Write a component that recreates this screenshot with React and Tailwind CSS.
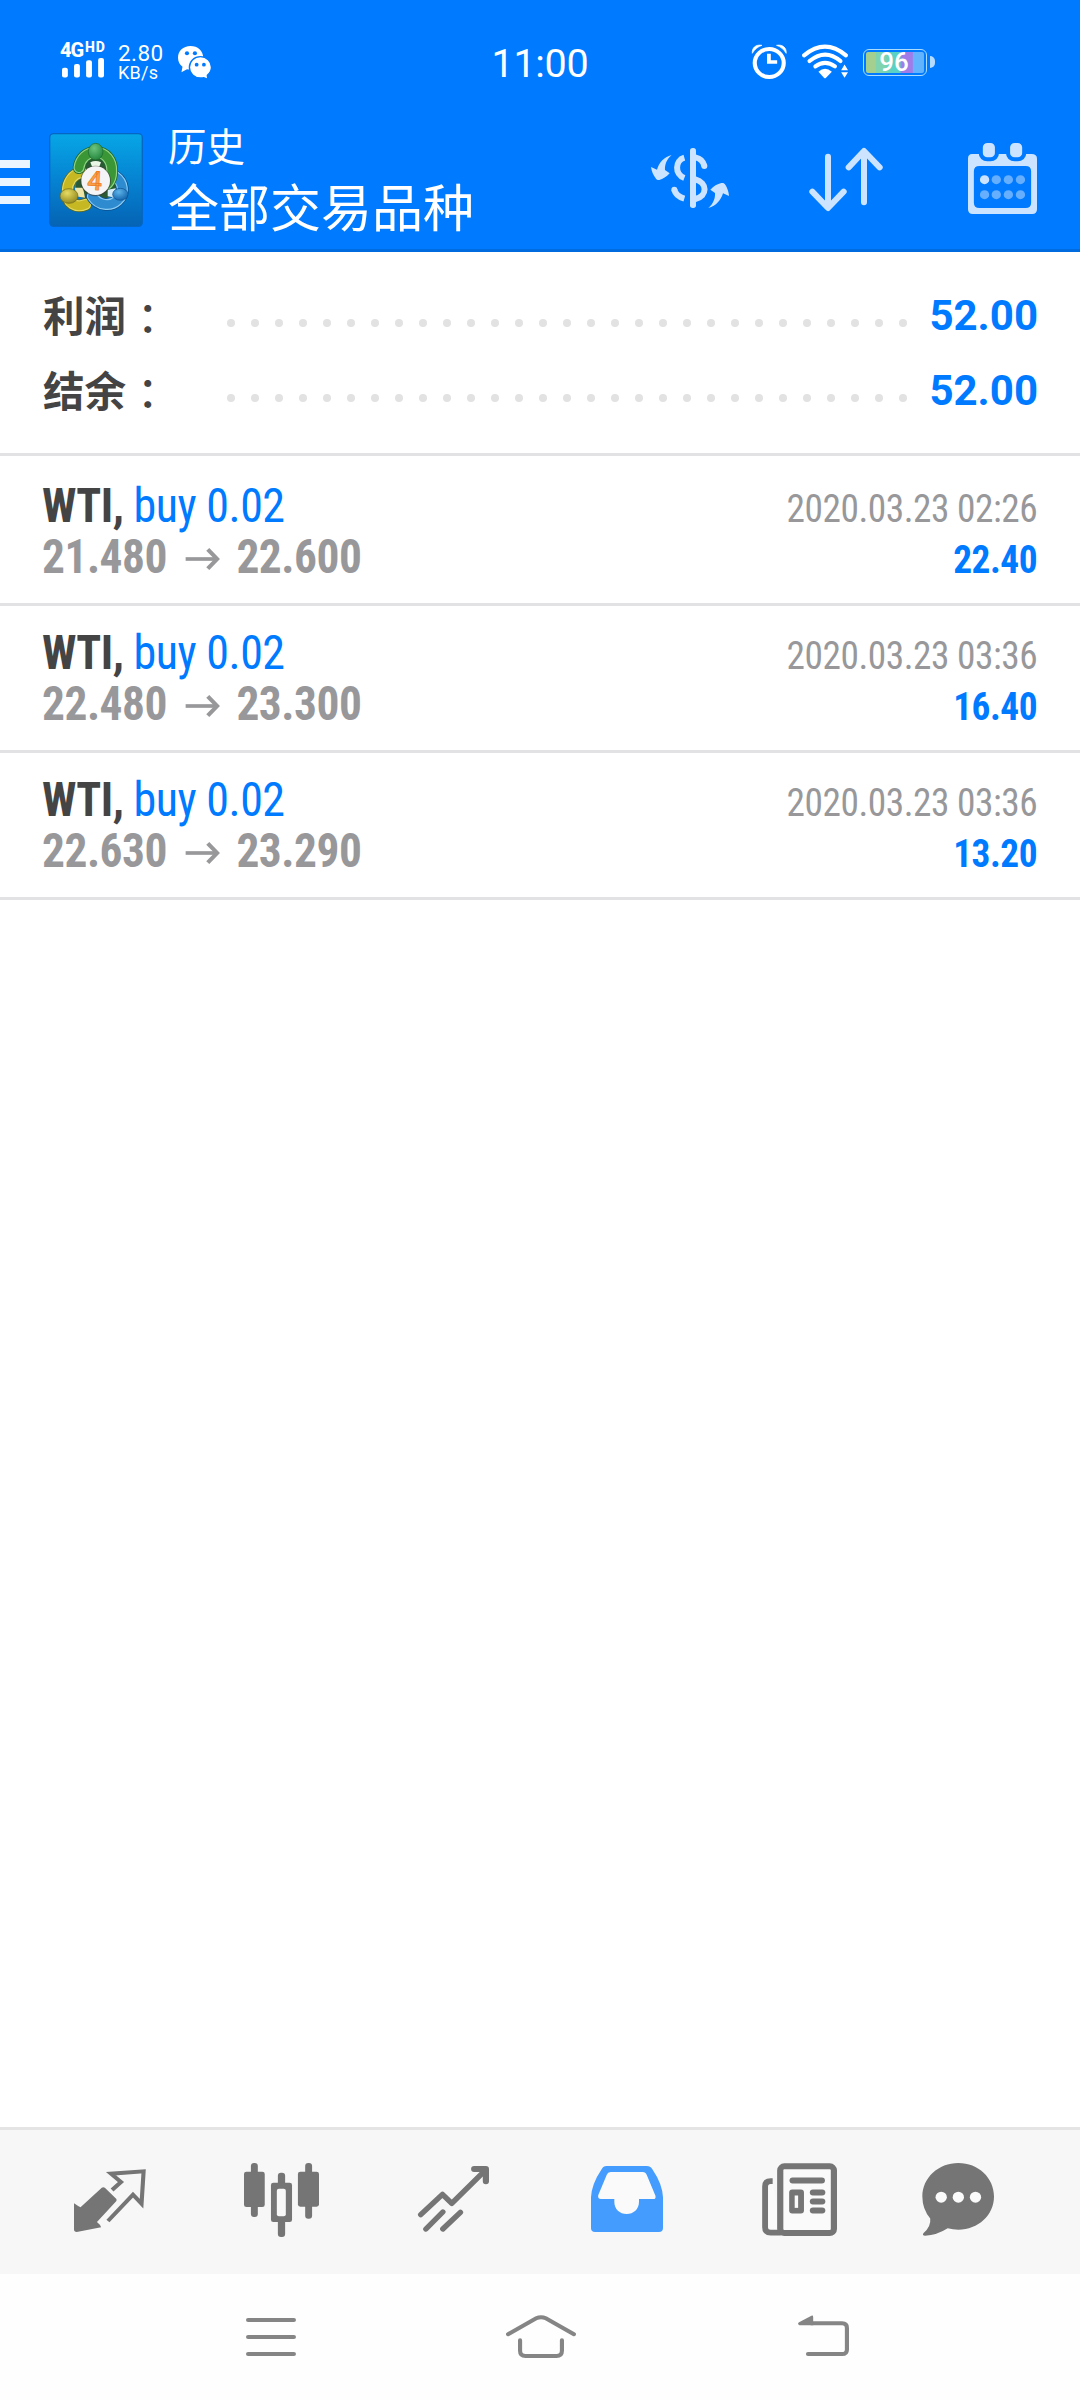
const CJK = "font-['Roboto','Noto_Sans_CJK_SC',sans-serif]"
const CONDENSED = "font-['Roboto_Condensed','Roboto',sans-serif] [font-stretch:75%]"

const summary = [
  { label: '利润', value: '52.00' },
  { label: '结余', value: '52.00' },
]

const deals = [
  { symbol: 'WTI', side: 'buy 0.02', open: '21.480', close: '22.600', time: '2020.03.23 02:26', profit: '22.40' },
  { symbol: 'WTI', side: 'buy 0.02', open: '22.480', close: '23.300', time: '2020.03.23 03:36', profit: '16.40' },
  { symbol: 'WTI', side: 'buy 0.02', open: '22.630', close: '23.290', time: '2020.03.23 03:36', profit: '13.20' },
]

function Icon({ box, className, children }) {
  return (
    <svg viewBox={box} preserveAspectRatio="none" className={`shrink-0 overflow-visible ${className}`}>
      {children}
    </svg>
  )
}

function SignalIcon() {
  return (
    <Icon box="180 173 122 58" className="w-[42px] h-[19.5px]">
      <g fill="#fff">
        <rect x="180" y="202" width="17" height="29" rx="6" />
        <rect x="215" y="191" width="17" height="40" rx="6" />
        <rect x="250" y="180" width="17" height="51" rx="6" />
        <rect x="285" y="173" width="17" height="58" rx="6" />
      </g>
    </Icon>
  )
}

function WechatIcon() {
  return (
    <Icon box="517 138 97 99" className="w-[33.5px] h-[33px]">
      <path d="M553 138c-21 0-36 15-36 35 0 12 5 21 13 27l-3 17 16-9c3 1 7 1 10 1 21 0 37-15 37-36s-16-35-37-35z" fill="#fff" />
      <circle cx="543" cy="160" r="6" fill="#007aff" />
      <circle cx="566" cy="160" r="6" fill="#007aff" />
      <path d="M582 170c-18 0-32 14-32 32s14 32 32 32c4 0 7 0 10-1l11 5-1-12c7-6 12-14 12-24 0-18-14-32-32-32z" fill="#fff" stroke="#007aff" strokeWidth="4" />
      <circle cx="571" cy="194" r="5.5" fill="#007aff" />
      <circle cx="592" cy="194" r="5.5" fill="#007aff" />
    </Icon>
  )
}

function AlarmIcon() {
  return (
    <Icon box="615 135 100 102" className="w-[34.5px] h-[34px]">
      <circle cx="665" cy="189" r="42" fill="none" stroke="#fff" strokeWidth="12" />
      <path d="M664 161v25h24" fill="none" stroke="#fff" strokeWidth="11" />
      <path d="M616 160c-2-16 10-28 28-24-12 4-21 12-28 24zM714 160c2-16-10-28-28-24 12 4 21 12 28 24z" fill="#fff" stroke="#fff" strokeWidth="2" />
    </Icon>
  )
}

function WifiIcon() {
  return (
    <Icon box="757 135 134 100" className="w-[46px] h-[33.5px]">
      <g fill="none" stroke="#fff" strokeWidth="12" strokeLinecap="round">
        <path d="M763 166q61-52 122 0" />
        <path d="M779 183q46-39 90 0" />
        <path d="M796 199q28-21 57 0" />
      </g>
      <path d="M805 215q19-18 39 0l-17 18q-3 3-6 0z" fill="#fff" />
      <path d="M871 210l10-17 10 17zM871 216l10 17 10-17z" fill="#fff" />
    </Icon>
  )
}

function Battery() {
  return (
    <div className="flex items-center">
      <div className="w-[64px] h-[27px] rounded-[6px] border-[1.5px] border-[#a9dcff] p-[2px]">
        <div className="h-full rounded-[2px] flex items-center justify-center bg-[linear-gradient(90deg,#a5cf8f_0_16%,#7fd3ae_18%_32%,#5bd0c4_45%_58%,#a07ce8_62%_80%,#62b4ff_81%)]">
          <span className="text-white text-[26px] leading-none font-medium -ml-[2px]">96</span>
        </div>
      </div>
      <div className="w-[5px] h-[12px] ml-[3px] rounded-r-full bg-[#b5dcff]" />
    </div>
  )
}

function StatusBar() {
  return (
    <div className="h-[120px] flex items-start px-[60px] text-white font-['Roboto',sans-serif]">
      <div className="w-[58px] pt-[42px]">
        <div className="flex items-start h-[15.5px] font-extrabold">
          <span className="text-[20px] leading-[16px] w-[25px] tracking-[-1px]">4G</span>
          <span className="text-[14px] leading-[10px] tracking-[0.8px]">HD</span>
        </div>
        <div className="pl-[2px]">
          <SignalIcon />
        </div>
      </div>
      <div className="w-[60px] pt-[43px]">
        <div className="text-[22.5px] leading-[21px] tracking-[0.4px]">2.80</div>
        <div className="text-[18px] leading-[18px] tracking-[0.3px]">KB/s</div>
      </div>
      <div className="pt-[46px]">
        <WechatIcon />
      </div>
      <div className="ml-[280px] pt-[44px] text-[39.5px] leading-[40px] tracking-[-0.3px]">11:00</div>
      <div className="flex items-center ml-auto mr-[85px] pt-[45px] gap-[15.5px]">
        <AlarmIcon />
        <WifiIcon />
        <Battery />
      </div>
    </div>
  )
}

function AppLogo() {
  const yellowArm = 'M258 284C230 296 200 282 203 244c1-28 16-50 42-56'
  const blueArm = 'M346 200c26 18 30 52 8 72-22 20-58 16-76-12'
  const greenArm = 'M238 174c4-28 24-46 50-46 30 0 50 26 48 58 0 14-4 26-12 36'
  return (
    <Icon box="148 70 282 282" className="w-[94px] h-[94px]">
      <defs>
        <linearGradient id="tile" x1="0" y1="0" x2="0" y2="1">
          <stop offset="0" stopColor="#07a6e6" />
          <stop offset="0.5" stopColor="#0583d2" />
          <stop offset="1" stopColor="#0563b4" />
        </linearGradient>
        <radialGradient id="green" cx="0.4" cy="0.3" r="0.8">
          <stop offset="0" stopColor="#6cc47e" />
          <stop offset="1" stopColor="#1c7f35" />
        </radialGradient>
        <radialGradient id="yellow" cx="0.4" cy="0.3" r="0.8">
          <stop offset="0" stopColor="#e6dc62" />
          <stop offset="1" stopColor="#8a8018" />
        </radialGradient>
        <radialGradient id="blue" cx="0.4" cy="0.3" r="0.8">
          <stop offset="0" stopColor="#5db4ea" />
          <stop offset="1" stopColor="#0a5ca6" />
        </radialGradient>
      </defs>
      <rect x="150" y="72" width="278" height="278" rx="12" fill="url(#tile)" stroke="#0566c4" strokeWidth="4" />
      <path d="M234 180q54-70 108 0l10 70-60 30-66-24z" fill="#2a5a34" />
      <g strokeLinecap="round" fill="none">
        <path d={yellowArm} stroke="#5f6a1e" strokeWidth="38" />
        <path d={yellowArm} stroke="#e3da62" strokeWidth="33" />
        <path d={yellowArm} stroke="#c6b823" strokeWidth="26" />
        <path d={blueArm} stroke="#0c4f8e" strokeWidth="38" />
        <path d={blueArm} stroke="#8accf3" strokeWidth="33" />
        <path d={blueArm} stroke="#2f8bd0" strokeWidth="26" />
        <path d={greenArm} stroke="#1d6a2c" strokeWidth="38" />
        <path d={greenArm} stroke="#93d386" strokeWidth="33" />
        <path d={greenArm} stroke="#3b9636" strokeWidth="26" />
      </g>
      <path d="M272 158q16-8 32 0l-7 18h-18z" fill="#e9f5e6" />
      <path d="M226 234l24 0 6 30-28-4z" fill="#eee6a8" />
      <path d="M324 240l24-4 2 28-26-4z" fill="#d5ecf9" />
      <ellipse cx="288" cy="126" rx="22" ry="25" fill="url(#green)" stroke="#1d6a2c" strokeWidth="2" />
      <ellipse cx="208" cy="259" rx="27" ry="22" fill="url(#yellow)" stroke="#6b661b" strokeWidth="2" />
      <ellipse cx="362" cy="254" rx="23" ry="18" fill="url(#blue)" stroke="#0c4f8e" strokeWidth="2" />
      <circle cx="288" cy="214" r="46" fill="#3b3a33" opacity="0.6" />
      <circle cx="288" cy="213" r="43" fill="#f4f3f5" />
      <text x="285" y="240" textAnchor="middle" fontFamily="Roboto" fontWeight="500" fontSize="78" fill="#f9a14a" stroke="#ee7a1e" strokeWidth="2" transform="rotate(4 285 213)">4</text>
    </Icon>
  )
}

function DollarIcon() {
  return (
    <Icon box="63 84 234 180" className="w-[78px] h-[60px]">
      <rect x="180" y="84" width="18" height="180" rx="8" fill="#cce4ff" />
      <g fill="none" stroke="#cce4ff" strokeWidth="18">
        <path d="M163 113c-28 8-30 50 0 61" />
        <path d="M133 209c3 14 13 22 30 27" />
        <path d="M196 112c15 3 24 12 27 26" />
        <path d="M196 178c37 10 37 50 0 59" />
      </g>
      <circle cx="133" cy="209" r="9" fill="#cce4ff" />
      <circle cx="223" cy="138" r="9" fill="#cce4ff" />
      <path d="M125 105c-16 14-21 30-20 45l14 10c-10 11-20 17-31 20-5 1-9-1-11-5-7-10-12-20-14-34l18 8c6-20 20-38 44-44z" fill="#cce4ff" />
      <path d="M235 264c16-14 21-30 20-45l-14-10c10-11 21-17 33-20 6-1 9 1 12 5 6 10 10 20 11 34l-18-8c-6 20-20 38-44 44z" fill="#cce4ff" />
    </Icon>
  )
}

function SortIcon() {
  return (
    <Icon box="537 84 222 189" className="w-[74px] h-[63px]">
      <g fill="none" stroke="#cce4ff" strokeWidth="18" strokeLinecap="round" strokeLinejoin="round">
        <path d="M594 110v153M547 215l47 49 47-49" />
        <path d="M702 247V94M656 142l46-49 47 49" />
      </g>
    </Icon>
  )
}

function CalendarIcon() {
  const cols = [1291, 1325, 1360, 1395]
  return (
    <Icon box="1243 429 200 213" className="w-[69px] h-[71px]">
      <path fillRule="evenodd" d="M1255 462h172q16 0 16 14v152q0 14-14 14h-172q-14 0-14-14V476q0-14 12-14zM1276 498q-16 0-16 16v94q0 16 16 16h134q16 0 16-16v-94q0-16-16-16z" fill="#cce4ff" />
      <g fill="#cce4ff" stroke="#007aff" strokeWidth="12">
        <rect x="1280" y="423" width="47" height="55" rx="19" />
        <rect x="1359" y="423" width="47" height="55" rx="19" />
      </g>
      {cols.map((x, i) => (
        <g key={x} fill="#66afff">
          <circle cx={x} cy="539" r="13.5" fill={i === 0 ? '#cce4ff' : '#66afff'} />
          <circle cx={x} cy="584" r="13.5" />
        </g>
      ))}
    </Icon>
  )
}

function Header() {
  return (
    <header className="bg-[#007aff] border-b-3 border-[#006bdf]">
      <StatusBar />
      <div className="h-[129px] flex items-start">
        <div className="mt-[40px] mr-[19px] w-[30px] space-y-[10px]">
          <div className="h-2 bg-[#eaf5ff]" />
          <div className="h-2 bg-[#eaf5ff]" />
          <div className="h-2 bg-[#eaf5ff]" />
        </div>
        <div className="mt-[13px]">
          <AppLogo />
        </div>
        <div className={`ml-[25px] mt-[8px] text-white ${CJK}`}>
          <div className="text-[38.5px] leading-[40px]">历史</div>
          <div className="text-[51px] leading-[60px] mt-[12px]">全部交易品种</div>
        </div>
        <div className="ml-auto mr-[43px] flex items-start">
          <div className="mt-[28px] mr-[80px]">
            <DollarIcon />
          </div>
          <div className="mt-[28px] mr-[85px]">
            <SortIcon />
          </div>
          <div className="mt-[23px]">
            <CalendarIcon />
          </div>
        </div>
      </div>
    </header>
  )
}

function SummaryRow({ label, value }) {
  return (
    <div className="h-[75px] flex items-center">
      <div className={`w-[184px] mt-[4px] flex text-[41.5px] leading-[75px] font-bold text-[#444] ${CJK}`}>
        {label}
        <span className="ml-[1px] font-medium font-['Noto_Sans_CJK_JP',sans-serif]">：</span>
      </div>
      <div className="flex gap-4 mt-[14px]">
        {Array.from({ length: 29 }, (_, i) => (
          <span key={i} className="size-2 rounded-full bg-[#e2e2e2]" />
        ))}
      </div>
      <div className="ml-auto text-[42px] leading-[75px] font-bold text-[#007aff] font-['Roboto',sans-serif]">{value}</div>
    </div>
  )
}

function ArrowIcon() {
  return (
    <Icon box="543 867 97 66" className="w-[35.5px] h-[22px]">
      <path d="M543 900h88" stroke="#98989b" strokeWidth="11" />
      <path d="M607 871l27 29-27 29" fill="none" stroke="#98989b" strokeWidth="12" />
    </Icon>
  )
}

function DealRow({ deal }) {
  return (
    <div className={`h-[147px] pl-[42px] pr-[43px] flex justify-between border-b-3 border-[#e2e2e4] pt-[21px] tracking-[-0.5px] ${CONDENSED}`}>
      <div className="text-[48px] leading-[51px]">
        <div className="origin-left scale-x-[0.958]">
          <span className="font-bold text-[#444]">{deal.symbol},</span>{' '}
          <span className="text-[#007aff]">{deal.side}</span>
        </div>
        <div className="flex items-center font-bold text-[#98989b] origin-left scale-x-[0.945]">
          <span>{deal.open}</span>
          <span className="ml-[20px] mr-[18px] mt-[5px]">
            <ArrowIcon />
          </span>
          <span>{deal.close}</span>
        </div>
      </div>
      <div className="text-right text-[39.5px] leading-[51px] pt-[3px] origin-right scale-x-[0.945]">
        <div className="text-[#98989b]">{deal.time}</div>
        <div className="font-bold text-[#007aff]">{deal.profit}</div>
      </div>
    </div>
  )
}

function QuotesIcon() {
  return (
    <Icon box="215 177 210 189" className="w-[72px] h-[63px]">
      <path d="M215 280v78q0 8 8 8l71-14q-2-8-12-16l56-62q3-4 0-8l-33-33q-5-3-9 0l-62 59q-8-4-19-12z" fill="#757575" />
      <path d="M326 240l26-24-29-25 95-7-6 97-25-27-73 79" fill="none" stroke="#757575" strokeWidth="12" />
    </Icon>
  )
}

function ChartIcon() {
  return (
    <Icon box="709 159 217 222" className="w-[75px] h-[74px]">
      <g fill="#757575">
        <rect x="729" y="159" width="20" height="162" rx="9" />
        <rect x="709" y="185" width="60" height="106" rx="7" />
        <rect x="807" y="188" width="21" height="193" rx="9" />
        <rect x="787" y="218" width="61" height="118" rx="7" />
        <rect x="886" y="159" width="20" height="167" rx="9" />
        <rect x="865" y="185" width="61" height="105" rx="7" />
      </g>
      <rect x="804" y="236" width="26" height="83" rx="6" fill="#f7f7f7" />
    </Icon>
  )
}

function TradeIcon() {
  return (
    <Icon box="1214 168 206 198" className="w-[71px] h-[66px]">
      <g fill="none" stroke="#757575" strokeWidth="16" strokeLinecap="round" strokeLinejoin="round">
        <path d="M1222 314l63-61 27 27 94-96" />
        <path d="M1377 177h34v37" strokeWidth="18" />
        <path d="M1286 306l-49 51M1337 307l-51 50" />
      </g>
    </Icon>
  )
}

function HistoryIcon() {
  return (
    <Icon box="147 168 210 198" className="w-[72px] h-[66px]">
      <path d="M192 168h118q10 0 16 10 29 44 31 84v92q0 12-12 12H159q-12 0-12-12v-92q2-40 31-84 5-10 14-10z" fill="#449cff" />
      <path d="M204 186h94q8 0 12 10l25 61q2 10-6 10h-42v8c0 22-16 37-36 37s-36-15-36-37v-8h-39q-10 0-8-11l25-62q3-8 11-8z" fill="#fafafa" />
    </Icon>
  )
}

function NewsIcon() {
  return (
    <Icon box="646 158 218 218" className="w-[75px] h-[73px]">
      <path d="M677 212h-6q-16 0-16 16v122q0 16 16 16h30" fill="#fafafa" stroke="#757575" strokeWidth="17" />
      <rect x="699" y="168" width="156" height="199" rx="12" fill="#fafafa" stroke="#757575" strokeWidth="18" />
      <g fill="#757575">
        <rect x="726" y="201" width="103" height="18" rx="9" />
        <rect x="725" y="237" width="43" height="72" rx="9" />
        <rect x="785" y="237" width="45" height="18" rx="9" />
        <rect x="785" y="264" width="45" height="18" rx="9" />
        <rect x="785" y="291" width="45" height="18" rx="9" />
      </g>
      <rect x="741" y="255" width="10" height="37" fill="#fafafa" />
    </Icon>
  )
}

function ChatIcon() {
  return (
    <Icon box="1108 158 210 218" className="w-[72px] h-[73px]">
      <path d="M1214 158c58 0 104 44 104 100s-46 99-104 99q-16 0-31-4-32 21-66 22-9 0-5-7 23-20 20-44-23-29-23-66c0-56 47-100 105-100z" fill="#757575" />
      <g fill="#fafafa">
        <circle cx="1164" cy="260" r="16.5" />
        <circle cx="1214" cy="260" r="16.5" />
        <circle cx="1264" cy="260" r="16.5" />
      </g>
    </Icon>
  )
}

function TabBar() {
  return (
    <nav className="h-[147px] bg-[#f7f7f7] border-t-3 border-[#e4e4e5] pl-[74px] pt-[33px] flex items-start">
      <div className="mt-[6px] mr-[98px]"><QuotesIcon /></div>
      <div className="mr-[99px]"><ChartIcon /></div>
      <div className="mt-[3px] mr-[102px]"><TradeIcon /></div>
      <div className="mt-[3px] mr-[99px]"><HistoryIcon /></div>
      <div className="mr-[85px]"><NewsIcon /></div>
      <div><ChatIcon /></div>
    </nav>
  )
}

function SystemNav() {
  return (
    <div className="h-[126px] bg-[#fefefe] pl-[246px] pt-[41px] flex items-start">
      <div className="w-[50px] mt-[3px] mr-[210px]">
        <Icon box="714 624 145 114" className="w-[50px] h-[38px]">
          <path d="M720 630h133M720 681h133M720 732h133" stroke="#858585" strokeWidth="12" strokeLinecap="round" />
        </Icon>
      </div>
      <div className="mr-[222px]">
        <Icon box="1469 614 204 130" className="w-[70px] h-[43px]">
          <g fill="none" stroke="#858585" strokeWidth="12" strokeLinecap="round">
            <path d="M1475 672l82-48q14-7 28 0l82 48" />
            <path d="M1510 690v32q0 16 16 16h90q16 0 16-16v-32" />
          </g>
        </Icon>
      </div>
      <Icon box="749 614 148 124" className="w-[51px] h-[41px]">
        <path d="M778 732h99q14 0 14-14v-65q0-14-14-14h-90" fill="none" stroke="#858585" strokeWidth="12" strokeLinecap="round" />
        <path d="M752 636l36-20q5-2 5 4v25h-40q-7-4-1-9z" fill="#858585" />
      </Icon>
    </div>
  )
}

export default function App() {
  return (
    <div className="w-[1080px] h-[2400px] flex flex-col bg-white overflow-hidden">
      <Header />
      <section className="pl-[43px] pr-[42px] pt-[26px] pb-[25px] border-b-3 border-[#e2e2e4]">
        {summary.map((row) => (
          <SummaryRow key={row.label} label={row.label} value={row.value} />
        ))}
      </section>
      <main className="flex-1 pt-[3px]">
        {deals.map((deal) => (
          <DealRow key={deal.open} deal={deal} />
        ))}
      </main>
      <TabBar />
      <SystemNav />
    </div>
  )
}
